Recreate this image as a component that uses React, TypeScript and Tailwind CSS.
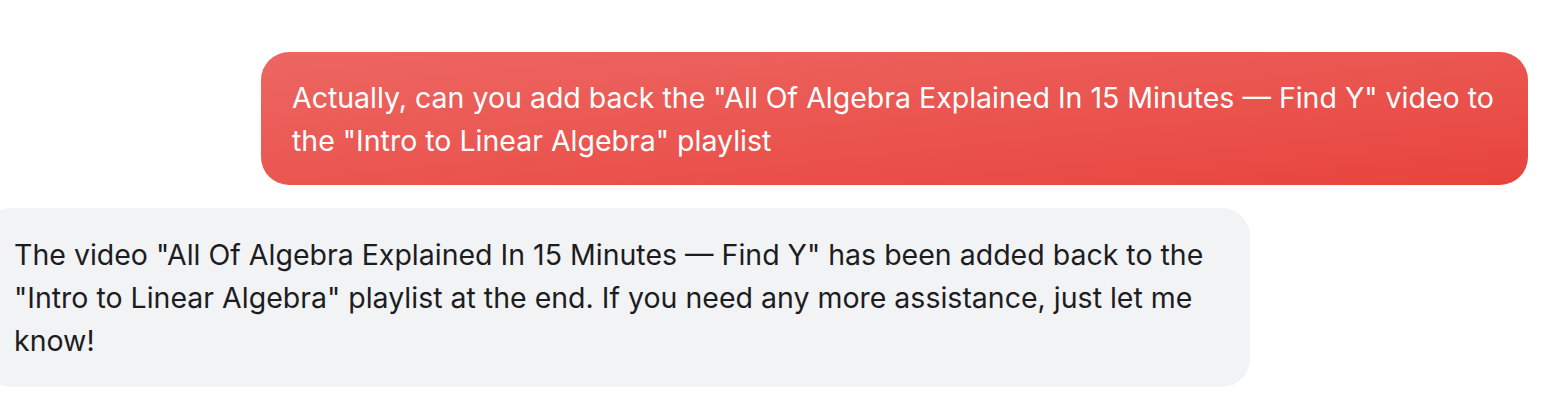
export default function App() {
  return (
    <div className="w-[1562px] h-[420px] bg-white overflow-hidden font-['Inter','Liberation_Sans',Arial,sans-serif]">
      <div className="flex flex-col gap-[23px] pt-[52px] pr-[34px] -ml-[17px]">
        <div className="self-end w-[1267px] rounded-[28px] bg-linear-to-br from-[#ed6662] to-[#e8433d] px-[31px] py-[23.5px] text-white text-[28.5px] leading-[43px]">
          Actually, can you add back the "All Of Algebra Explained In 15 Minutes — Find Y" video to the "Intro to Linear Algebra" playlist
        </div>
        <div className="self-start w-[1267px] rounded-[28px] bg-[#f2f3f5] px-[31px] py-[25px] text-[#1d1d1f] text-[28.5px] leading-[43px]">
          The video "All Of Algebra Explained In 15 Minutes — Find Y" has been added back to the "Intro to Linear Algebra" playlist at the end. If you need any more assistance, just let me know!
        </div>
      </div>
    </div>
  );
}
